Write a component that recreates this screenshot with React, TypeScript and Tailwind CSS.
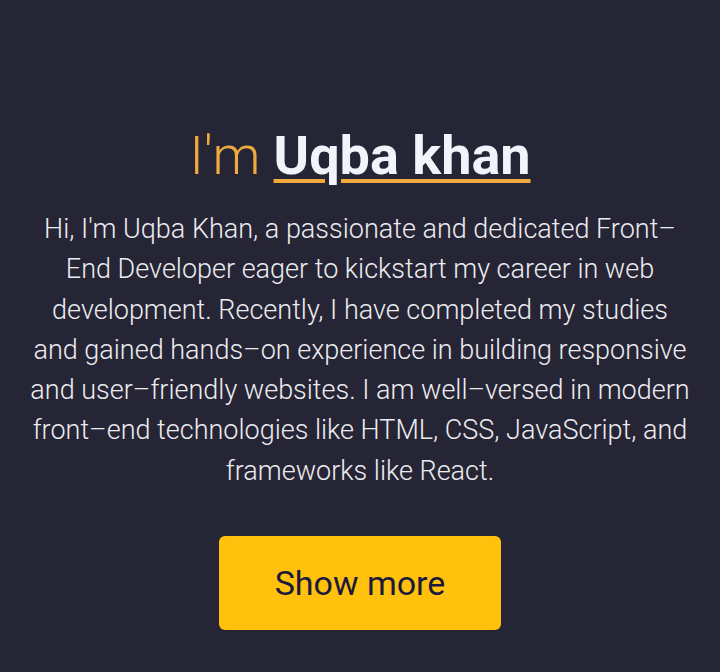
export default function App() {
  return (
    <div className="w-[720px] h-[672px] bg-[#262535] flex flex-col items-center pt-[124px] px-[30px]" style={{ fontFamily: "Roboto, 'Noto Sans', sans-serif" }}>
      <h1 className="text-[54px] leading-[64px] text-center">
        <span className="font-light text-[#f0a93e]">I'm </span>
        <span className="font-bold text-[#f1f4fb] underline decoration-[#f0a93e] decoration-[4px] underline-offset-[5px]">Uqba khan</span>
      </h1>
      <p className="mt-[21px] text-[27px] leading-[40.3px] font-light text-[#ececf0] text-center">
        Hi, I'm Uqba Khan, a passionate and dedicated Front–End Developer eager to kickstart my career in web development. Recently, I have completed my studies and gained hands–on experience in building responsive and user–friendly websites. I am well–versed in modern front–end technologies like HTML, CSS, JavaScript, and frameworks like React.
      </p>
      <button className="mt-[45px] w-[282px] h-[94px] rounded-[6px] bg-[#ffc10b] text-[34px] text-[#1b1a3c]">
        Show more
      </button>
    </div>
  );
}
